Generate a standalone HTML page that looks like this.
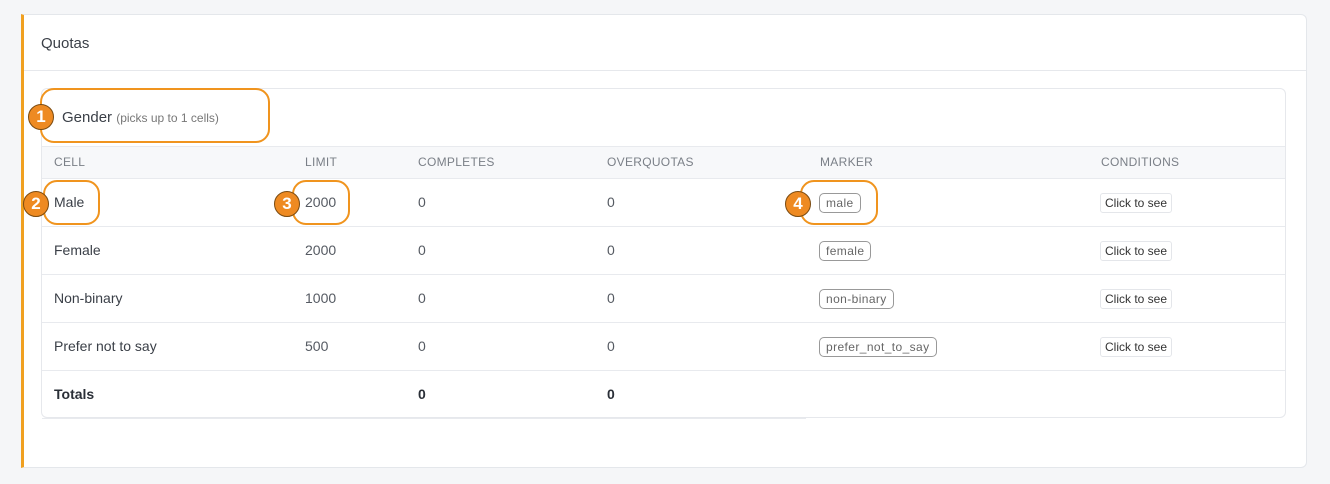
<!DOCTYPE html>
<html><head><style>
body{margin:0;width:1330px;height:484px;background:#f5f6f8;font-family:"Liberation Sans",sans-serif;position:relative;overflow:hidden;color:#3a3f47}
.card{position:absolute;left:21px;top:14px;width:1286px;height:454px;background:#fff;border:1px solid #e4e7eb;border-left:3px solid #f0a020;border-radius:0 6px 6px 0;box-sizing:border-box}
.hdr{position:absolute;left:0;top:0;right:0;height:55px;border-bottom:1px solid #e6e8ec}
.hdr span{position:absolute;left:17px;top:20px;font-size:15px;color:#3a3f47}
.inner{position:absolute;left:41px;top:88px;width:1245px;height:330px;border:1px solid #e6e8ec;border-radius:6px;box-sizing:border-box;background:#fff}
.t{position:absolute;font-size:14px;color:#555a62}
.h{position:absolute;font-size:12px;color:#7a7f87;letter-spacing:.3px;top:155px}
.row{position:absolute;left:42px;width:1243px;border-top:1px solid #e8eaee}
.tag{position:absolute;font-size:12px;color:#666;border:1.5px solid #999;border-radius:5px;padding:0 6px;height:18px;line-height:18px;letter-spacing:.4px}
.btn{position:absolute;left:1100px;font-size:12px;color:#333;border:1px solid #e4e6ea;border-radius:3px;padding:2px 4px;background:#fff}
.ann{position:absolute;border:2px solid #f0941e;border-radius:14px;box-sizing:border-box}
.num{position:absolute;width:26px;height:26px;border-radius:50%;background:#ee8a22;border:1.5px solid #7a4a10;box-sizing:border-box;color:#fff;font-weight:bold;font-size:17px;text-align:center;line-height:23px}
</style></head><body>
<div class="card"><div class="hdr"><span>Quotas</span></div></div>
<div class="inner"></div>
<div style="position:absolute;left:42px;top:146px;width:1243px;height:32px;background:#f7f8fa;border-top:1px solid #e8eaee"></div>
<div class="t" style="left:62px;top:109px;font-size:15px;color:#3a3f47">Gender <span style="font-size:12px;color:#777">(picks up to 1 cells)</span></div>
<div class="h" style="left:54px">CELL</div><div class="h" style="left:305px">LIMIT</div><div class="h" style="left:418px">COMPLETES</div><div class="h" style="left:607px">OVERQUOTAS</div><div class="h" style="left:820px">MARKER</div><div class="h" style="left:1101px">CONDITIONS</div>
<div class="row" style="top:178px"></div><div class="row" style="top:226px"></div><div class="row" style="top:274px"></div><div class="row" style="top:322px"></div><div class="row" style="top:370px"></div>
<div class="row" style="top:418px;width:764px"></div>

<div class="t" style="left:54px;top:194px;color:#3a3f47">Male</div><div class="t" style="left:305px;top:194px">2000</div><div class="t" style="left:418px;top:194px">0</div><div class="t" style="left:607px;top:194px">0</div>
<div class="tag" style="left:819px;top:193px">male</div><div class="btn" style="top:193px">Click to see</div>
<div class="t" style="left:54px;top:242px;color:#3a3f47">Female</div><div class="t" style="left:305px;top:242px">2000</div><div class="t" style="left:418px;top:242px">0</div><div class="t" style="left:607px;top:242px">0</div>
<div class="tag" style="left:819px;top:241px">female</div><div class="btn" style="top:241px">Click to see</div>
<div class="t" style="left:54px;top:290px;color:#3a3f47">Non-binary</div><div class="t" style="left:305px;top:290px">1000</div><div class="t" style="left:418px;top:290px">0</div><div class="t" style="left:607px;top:290px">0</div>
<div class="tag" style="left:819px;top:289px">non-binary</div><div class="btn" style="top:289px">Click to see</div>
<div class="t" style="left:54px;top:338px;color:#3a3f47">Prefer not to say</div><div class="t" style="left:305px;top:338px">500</div><div class="t" style="left:418px;top:338px">0</div><div class="t" style="left:607px;top:338px">0</div>
<div class="tag" style="left:819px;top:337px">prefer_not_to_say</div><div class="btn" style="top:337px">Click to see</div>
<div class="t" style="left:54px;top:386px;font-weight:bold;color:#2a2f37">Totals</div><div class="t" style="left:418px;top:386px;font-weight:bold;color:#2a2f37">0</div><div class="t" style="left:607px;top:386px;font-weight:bold;color:#2a2f37">0</div>

<div class="ann" style="left:40px;top:88px;width:230px;height:55px"></div>
<div class="ann" style="left:43px;top:180px;width:57px;height:45px"></div>
<div class="ann" style="left:292px;top:180px;width:58px;height:45px"></div>
<div class="ann" style="left:800px;top:180px;width:78px;height:45px"></div>
<div class="num" style="left:28px;top:104px">1</div>
<div class="num" style="left:23px;top:191px">2</div>
<div class="num" style="left:274px;top:191px">3</div>
<div class="num" style="left:785px;top:191px">4</div>
</body></html>
